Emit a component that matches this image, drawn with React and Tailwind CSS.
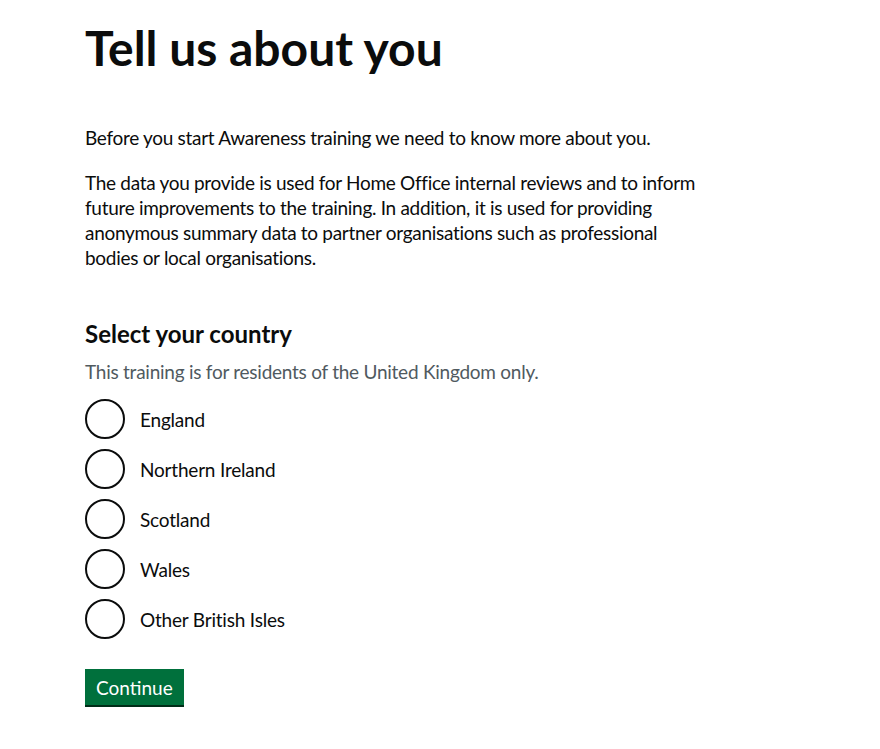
const countries = [
  "England",
  "Northern Ireland",
  "Scotland",
  "Wales",
  "Other British Isles",
];

const App = () => {
  return (
    <div className="min-h-screen bg-white text-[#0b0c0c] font-['Lato',sans-serif]">
      <main className="px-[85px] pt-[23px] pb-10">
        {/* HEADING */}
        <h1 className="text-[48px] leading-[50px] font-bold mb-[52px]">
          Tell us about you
        </h1>

        {/* INTRO */}
        <div className="max-w-[620px] text-[19px] leading-[25px] tracking-[-0.3px]">
          <p className="mb-5">
            Before you start Awareness training we need to know more about you.
          </p>
          <p className="mb-[49px]">
            The data you provide is used for Home Office internal reviews and
            to inform future improvements to the training. In addition, it is
            used for providing anonymous summary data to partner organisations
            such as professional bodies or local organisations.
          </p>
        </div>

        {/* FORM */}
        <fieldset>
          <legend className="text-[24px] leading-[30px] font-bold mb-[10px]">
            Select your country
          </legend>
          <p className="text-[19px] leading-[25px] tracking-[-0.25px] text-[#505a5f] mb-[15px]">
            This training is for residents of the United Kingdom only.
          </p>

          <div className="flex flex-col gap-[10px]">
            {countries.map((country) => (
              <label key={country} className="flex items-center gap-[15px] cursor-pointer">
                <input
                  type="radio"
                  name="country"
                  value={country}
                  className="appearance-none w-10 h-10 rounded-full border-2 border-[#0b0c0c] bg-white checked:border-[10px] cursor-pointer"
                />
                <span className="text-[19px] leading-[25px] tracking-[-0.2px]">{country}</span>
              </label>
            ))}
          </div>
        </fieldset>

        {/* SUBMIT */}
        <button className="mt-[30px] bg-[#00703c] text-white text-[19px] leading-[19px] px-[11px] pt-[9px] pb-[8px] shadow-[0_2px_0_#002d18] cursor-pointer">
          Continue
        </button>
      </main>
    </div>
  );
};

export default App;
